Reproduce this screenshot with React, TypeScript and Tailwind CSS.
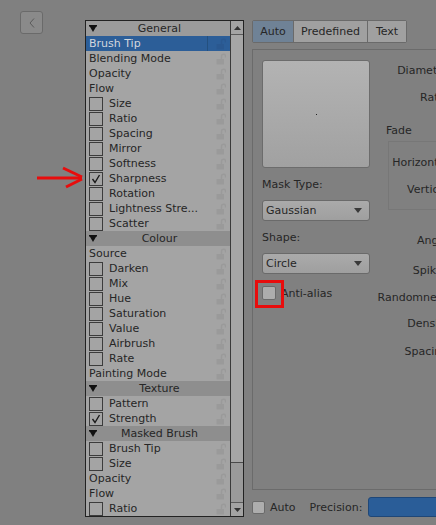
import React from "react";

type Row =
  | { kind: "header"; label: string; light?: boolean }
  | { kind: "item"; label: string; cb?: boolean; checked?: boolean; selected?: boolean };

const rows: Row[] = [
  { kind: "header", label: "General", light: true },
  { kind: "item", label: "Brush Tip", selected: true },
  { kind: "item", label: "Blending Mode" },
  { kind: "item", label: "Opacity" },
  { kind: "item", label: "Flow" },
  { kind: "item", label: "Size", cb: true },
  { kind: "item", label: "Ratio", cb: true },
  { kind: "item", label: "Spacing", cb: true },
  { kind: "item", label: "Mirror", cb: true },
  { kind: "item", label: "Softness", cb: true },
  { kind: "item", label: "Sharpness", cb: true, checked: true },
  { kind: "item", label: "Rotation", cb: true },
  { kind: "item", label: "Lightness Stre...", cb: true },
  { kind: "item", label: "Scatter", cb: true },
  { kind: "header", label: "Colour" },
  { kind: "item", label: "Source" },
  { kind: "item", label: "Darken", cb: true },
  { kind: "item", label: "Mix", cb: true },
  { kind: "item", label: "Hue", cb: true },
  { kind: "item", label: "Saturation", cb: true },
  { kind: "item", label: "Value", cb: true },
  { kind: "item", label: "Airbrush", cb: true },
  { kind: "item", label: "Rate", cb: true },
  { kind: "item", label: "Painting Mode" },
  { kind: "header", label: "Texture" },
  { kind: "item", label: "Pattern", cb: true },
  { kind: "item", label: "Strength", cb: true, checked: true },
  { kind: "header", label: "Masked Brush" },
  { kind: "item", label: "Brush Tip", cb: true },
  { kind: "item", label: "Size", cb: true },
  { kind: "item", label: "Opacity" },
  { kind: "item", label: "Flow" },
  { kind: "item", label: "Ratio", cb: true },
];

function Lock({ color }: { color: string }) {
  return (
    <svg width="10" height="12" viewBox="0 0 10 12">
      <path d="M5.5 6 V3.2 A2 2 0 0 1 9.5 3.2 V4.5" fill="none" stroke={color} strokeWidth="1.4" />
      <rect x="0.5" y="6" width="7.5" height="5.5" fill={color} />
    </svg>
  );
}

function Tri() {
  return (
    <svg width="8" height="7" viewBox="0 0 8 7">
      <rect x="0" y="0" width="8" height="1.5" fill="#111" />
      <polygon points="0.5,1 7.5,1 4,7" fill="#111" />
    </svg>
  );
}

function ListRow({ r }: { r: Row }) {
  if (r.kind === "header") {
    return (
      <div
        className={`grid grid-cols-[1fr_auto_1fr] items-center h-[15px] pl-[3px] ${
          r.light ? "bg-[#9b9b9b]" : "bg-[#8e8e8e]"
        }`}
      >
        <div className="justify-self-start flex items-center">
          <Tri />
        </div>
        <span className="leading-none">{r.label}</span>
        <div />
      </div>
    );
  }
  return (
    <div className={`flex items-center h-[15px] ${r.selected ? "bg-[#2c5e98] text-[#d2d7dd]" : ""}`}>
      <div className="flex-1 flex items-center pl-[3px] min-w-0">
        {r.cb && (
          <div className="w-[14px] h-[14px] border border-[#3c3c3c] mr-[6px] flex items-center justify-center shrink-0">
            {r.checked && (
              <svg width="10" height="10" viewBox="0 0 10 10">
                <polyline points="1.5,5 4,8.5 8.5,1" fill="none" stroke="#1a1a1a" strokeWidth="1.4" />
              </svg>
            )}
          </div>
        )}
        <span className="leading-none whitespace-nowrap">{r.label}</span>
      </div>
      <div
        className={`w-[23px] h-full flex items-center justify-end pr-[4px] ${
          r.selected ? "border-l border-[#24507f]" : ""
        }`}
      >
        <Lock color={r.selected ? "#2a5890" : "#9a9a9a"} />
      </div>
    </div>
  );
}

function Dropdown({ label }: { label: string }) {
  return (
    <div className="h-[21px] w-[108px] rounded-[3px] border border-[#6a6a6a] bg-gradient-to-b from-[#aaaaaa] to-[#9f9f9f] flex items-center pl-[3px] pr-[7px]">
      <span className="flex-1 leading-none">{label}</span>
      <svg width="8" height="5" viewBox="0 0 8 5">
        <polygon points="0,0 8,0 4,5" fill="#3a3a3a" />
      </svg>
    </div>
  );
}

function Label({ text, h, w = "w-[76px]" }: { text: string; h: string; w?: string }) {
  return (
    <div className={`flex items-center ${h}`}>
      <div className={`${w} text-right whitespace-nowrap leading-none`}>{text}</div>
    </div>
  );
}

export default function App() {
  return (
    <div
      className="relative w-[436px] h-[525px] overflow-hidden bg-[#808080] flex text-[11px] text-[#262626]"
      style={{ fontFamily: '"DejaVu Sans", sans-serif' }}
    >
      {/* left strip with back button */}
      <div className="w-[85px] shrink-0">
        <div className="ml-[20px] mt-[11px] w-[23px] h-[23px] rounded-[3px] border border-[#6a6a6a] bg-[#8a8a8a] flex items-center justify-center">
          <svg width="6" height="10" viewBox="0 0 6 10">
            <polyline points="5,0.5 1,5 5,9.5" fill="none" stroke="#5a5a5a" strokeWidth="1" />
          </svg>
        </div>
      </div>

      {/* list panel */}
      <div className="mt-[20px] w-[159px] h-[497px] shrink-0 border border-[#222] flex">
        <div className="w-[144px] bg-[#a4a4a4] flex flex-col">
          {rows.map((r, i) => (
            <ListRow key={i} r={r} />
          ))}
        </div>
        <div className="flex-1 border-l border-[#3a3a3a] flex flex-col bg-[#9a9a9a]">
          <div className="h-[14px] border-b border-[#5a5a5a] bg-[#a3a3a3] flex items-center justify-center">
            <svg width="7" height="4" viewBox="0 0 7 4">
              <polygon points="0,4 7,4 3.5,0" fill="#333" />
            </svg>
          </div>
          <div className="h-[428px] border-b border-[#4a4a4a] bg-[#a6a6a6]" />
          <div className="flex-1" />
          <div className="h-[14px] border-t border-[#5a5a5a] bg-[#a3a3a3] flex items-center justify-center">
            <svg width="7" height="4" viewBox="0 0 7 4">
              <polygon points="0,0 7,0 3.5,4" fill="#333" />
            </svg>
          </div>
        </div>
      </div>

      {/* right section */}
      <div className="ml-[8px] mt-[20px] w-[320px] shrink-0 flex flex-col">
        <div className="flex w-fit h-[23px] border border-[#6a6a6a] rounded-[2px]">
          <div className="w-[40px] bg-[#6f8296] flex items-center justify-center pt-[1px]">Auto</div>
          <div className="w-[74px] bg-[#a0a0a0] border-l border-[#6a6a6a] flex items-center justify-center pt-[1px]">
            Predefined
          </div>
          <div className="w-[39px] bg-[#a0a0a0] border-l border-[#6a6a6a] flex items-center justify-center pt-[1px]">
            Text
          </div>
        </div>

        <div className="mt-[6px] h-[441px] border border-[#6b6b6b] flex">
          <div className="pl-[9px] pt-[10px] flex flex-col shrink-0">
            <div className="w-[108px] h-[108px] rounded-[3px] border border-[#6c6c6c] bg-gradient-to-b from-[#b3b3b3] to-[#a1a1a1] flex items-center justify-center">
              <div className="w-[1px] h-[1px] bg-[#222]" />
            </div>
            <div className="mt-[8px] h-[16px] flex items-center leading-none">Mask Type:</div>
            <div className="mt-[8px]">
              <Dropdown label="Gaussian" />
            </div>
            <div className="mt-[8px] h-[16px] flex items-center leading-none">Shape:</div>
            <div className="mt-[8px]">
              <Dropdown label="Circle" />
            </div>
            <div className="mt-[12px] flex items-center h-[14px]">
              <div className="relative w-[14px] h-[14px] rounded-[2px] border border-[#6a6a6a] bg-[#adadad]">
                <div className="absolute left-[-8px] top-[-7px] w-[29px] h-[28px] border-[3px] border-[#e80c0c]" />
              </div>
              <span className="ml-[5px] leading-none">Anti-alias</span>
            </div>
          </div>

          <div className="ml-[6px] pt-[7px] flex flex-col shrink-0">
            <Label text="Diameter:" h="h-[27px]" />
            <Label text="Ratio:" h="h-[27px]" />
            <div className="mt-[10px] h-[18px] flex items-center pl-[10px] leading-none">Fade</div>
            <div className="ml-[12px] mt-[2px] w-[140px] border border-[#777777] pt-[7px] pb-[6px] flex flex-col">
              <Label text="Horizontal:" h="h-[27px]" w="w-[63px]" />
              <Label text="Vertical:" h="h-[27px]" w="w-[63px]" />
            </div>
            <div className="mt-[15px] flex flex-col">
              <Label text="Angle:" h="h-[30px]" />
              <Label text="Spikes:" h="h-[30px]" />
              <Label text="Randomness:" h="h-[24px]" />
              <Label text="Density:" h="h-[28px]" />
              <Label text="Spacing:" h="h-[28px]" />
            </div>
          </div>
        </div>

        <div className="mt-[7px] h-[20px] flex items-center">
          <div className="w-[13px] h-[13px] rounded-[2px] border border-[#6a6a6a] bg-[#adadad]" />
          <span className="ml-[5px] leading-none">Auto</span>
          <span className="ml-[14px] leading-none">Precision:</span>
          <div className="ml-[6px] w-[100px] h-[20px] rounded-[3px] border border-[#1f4778] bg-[#2a5d98]" />
        </div>
      </div>

      {/* red annotation arrow */}
      <svg className="absolute left-[30px] top-[160px]" width="60" height="35" viewBox="0 0 60 35">
        <line x1="7" y1="18" x2="52" y2="18" stroke="#e80c0c" strokeWidth="3" />
        <line x1="33" y1="8" x2="52" y2="17" stroke="#e80c0c" strokeWidth="3" />
        <line x1="36" y1="27" x2="52" y2="19" stroke="#e80c0c" strokeWidth="3" />
      </svg>
    </div>
  );
}
